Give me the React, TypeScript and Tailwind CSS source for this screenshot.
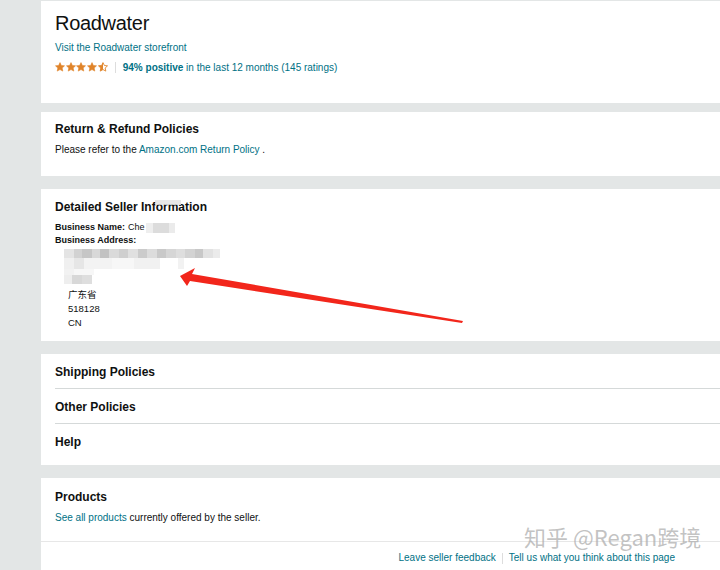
import React from "react";

const font = { fontFamily: '"Liberation Sans", Arial, "Noto Sans CJK SC", sans-serif' };

const STAR = "M5 0.6l1.35 2.9 3.15.35-2.35 2.15.65 3.1L5 7.55 2.2 9.1l.65-3.1L.5 3.85l3.15-.35z";

function Star({ half = false }: { half?: boolean }) {
  return (
    <svg width="10" height="10" viewBox="0 0 10 10" aria-hidden>
      <defs>
        <clipPath id="half-left">
          <rect x="0" y="0" width="5" height="10" />
        </clipPath>
      </defs>
      {half ? (
        <>
          <path d={STAR} fill="none" stroke="#e0842a" strokeWidth="0.9" />
          <path d={STAR} fill="#e0842a" clipPath="url(#half-left)" />
        </>
      ) : (
        <path d={STAR} fill="#e0842a" stroke="#e0842a" strokeWidth="0.6" />
      )}
    </svg>
  );
}

// pixelated cells that hide the street address
const mosaicRows = [
  {
    h: "h-[9px]",
    cells: [
      "w-[10px] bg-[#e4e4e4]",
      "w-[8px] bg-[#d2d2d2]",
      "w-[10px] bg-[#c6c6c6]",
      "w-[8px] bg-[#d8d8d8]",
      "w-[9px] bg-[#c2c2c2]",
      "w-[10px] bg-[#dadada]",
      "w-[9px] bg-[#cfcfcf]",
      "w-[10px] bg-[#e0e0e0]",
      "w-[9px] bg-[#cbcbcb]",
      "w-[10px] bg-[#dcdcdc]",
      "w-[9px] bg-[#c9c9c9]",
      "w-[10px] bg-[#d6d6d6]",
      "w-[9px] bg-[#dedede]",
      "w-[10px] bg-[#d3d3d3]",
      "w-[8px] bg-[#c8c8c8]",
      "w-[10px] bg-[#e2e2e2]",
      "w-[7px] bg-[#ebebeb]",
    ],
  },
  {
    h: "h-[11px]",
    cells: [
      "w-[10px] bg-[#f0f0f0]",
      "w-[10px] bg-[#e6e6e6]",
      "w-[28px] bg-[#f3f3f3]",
      "w-[22px] bg-[#f7f7f7]",
      "w-[26px] bg-[#f1f1f1]",
      "w-[18px] bg-white",
      "w-[6px] bg-[#f2f2f2]",
    ],
  },
  {
    h: "h-[6px]",
    cells: ["w-[10px] bg-[#f2f2f2]", "w-[20px] bg-[#f7f7f7]"],
  },
  {
    h: "h-[9px]",
    cells: ["w-[8px] bg-[#eeeeee]", "w-[10px] bg-[#d8d8d8]", "w-[10px] bg-[#dedede]"],
  },
];

function Card({ className = "", children }: { className?: string; children: React.ReactNode }) {
  return <section className={`bg-white pl-[14px] ${className}`}>{children}</section>;
}

export default function App() {
  return (
    <div style={font} className="relative flex h-[570px] w-[720px] overflow-hidden bg-[#e3e6e6] text-[#0f1111]">
      <div className="w-[41px] shrink-0" />

      <main className="flex flex-1 flex-col pt-px">
        <Card className="h-[102px] pt-[10px]">
          <h1 className="text-[20px] font-normal leading-[24px] tracking-[-0.3px]">Roadwater</h1>
          <a className="mt-[5px] block text-[10px] leading-[16px] text-[#007185]">
            Visit the Roadwater storefront
          </a>
          <div className="mt-[3px] flex h-[16px] items-center text-[10px]">
            <div className="flex gap-[0.7px]">
              <Star />
              <Star />
              <Star />
              <Star />
              <Star half />
            </div>
            <span className="mx-[7px] h-[11px] w-px bg-[#dddddd]" />
            <span className="text-[#007185]">
              <b className="font-bold">94% positive</b> in the last 12 months (145 ratings)
            </span>
          </div>
        </Card>

        <Card className="mt-[9px] h-[64px] pt-[9px]">
          <h2 className="text-[12px] font-bold leading-[16px]">Return &amp; Refund Policies</h2>
          <p className="mt-[5px] text-[10px] leading-[16px]">
            Please refer to the <a className="text-[#007185]">Amazon.com Return Policy</a> .
          </p>
        </Card>

        <Card className="mt-[13px] h-[152px] pt-[10px]">
          <h2 className="relative text-[12px] font-bold leading-[16px]">
            Detailed Seller Information
            <span className="absolute left-[100px] top-[1px] h-[5px] w-[26px] bg-[#e2e2e2]/80" />
          </h2>
          <div className="mt-[6px] text-[9px] leading-[13px]">
            <p className="flex items-center">
              <b className="font-bold">Business Name:</b>
              <span className="ml-[3px]">Che</span>
              <span className="ml-px h-[10px] w-[7px] bg-[#eeeeee]" />
              <span className="h-[10px] w-[16px] bg-[#dcdcdc]" />
              <span className="h-[10px] w-[6px] bg-[#ebebeb]" />
            </p>
            <p>
              <b className="font-bold">Business Address:</b>
            </p>
          </div>
          <div className="ml-[9px] mt-[2px] flex flex-col">
            {mosaicRows.map((row, i) => (
              <div key={i} className={`flex ${row.h}`}>
                {row.cells.map((c, j) => (
                  <span key={j} className={c} />
                ))}
              </div>
            ))}
          </div>
          <div className="ml-[13px] mt-[4px] text-[9.5px] leading-[14px]">
            <p>广东省</p>
            <p>518128</p>
            <p>CN</p>
          </div>
        </Card>

        <Card className="mt-[13px] h-[111px]">
          {["Shipping Policies", "Other Policies"].map((t) => (
            <div key={t} className="h-[35px] border-b border-[#d5d9d9] pt-[10px]">
              <h2 className="text-[12px] font-bold leading-[16px]">{t}</h2>
            </div>
          ))}
          <div className="pt-[10px]">
            <h2 className="text-[12px] font-bold leading-[16px]">Help</h2>
          </div>
        </Card>

        <section className="mt-[13px] flex-1 bg-white">
          <div className="border-b border-[#e7e7e7] pb-[15px] pl-[14px] pt-[11px]">
            <h2 className="text-[12px] font-bold leading-[16px]">Products</h2>
            <p className="mt-[5px] text-[10px] leading-[16px]">
              <a className="text-[#007185]">See all products</a> currently offered by the seller.
            </p>
          </div>
          <div className="flex items-center justify-end pr-[45px] pt-[8px] text-[10px] leading-[16px] text-[#007185]">
            <a>Leave seller feedback</a>
            <span className="mx-[6px] h-[11px] w-px bg-[#dddddd]" />
            <a>Tell us what you think about this page</a>
          </div>
        </section>
      </main>

      <svg className="pointer-events-none absolute left-0 top-0" width="720" height="570" aria-hidden>
        <polygon
          points="180,276 195,268 192,274 463,321 462,323 190,281 187,286"
          fill="#f2261b"
        />
      </svg>

      <span
        className="pointer-events-none absolute left-[524px] top-[522px] text-[22px] leading-[28px] text-[#a9a9a9]/70"
        style={{ fontFamily: '"Noto Sans CJK SC", "Noto Sans", sans-serif' }}
      >
        知乎 @Regan跨境
      </span>
    </div>
  );
}
